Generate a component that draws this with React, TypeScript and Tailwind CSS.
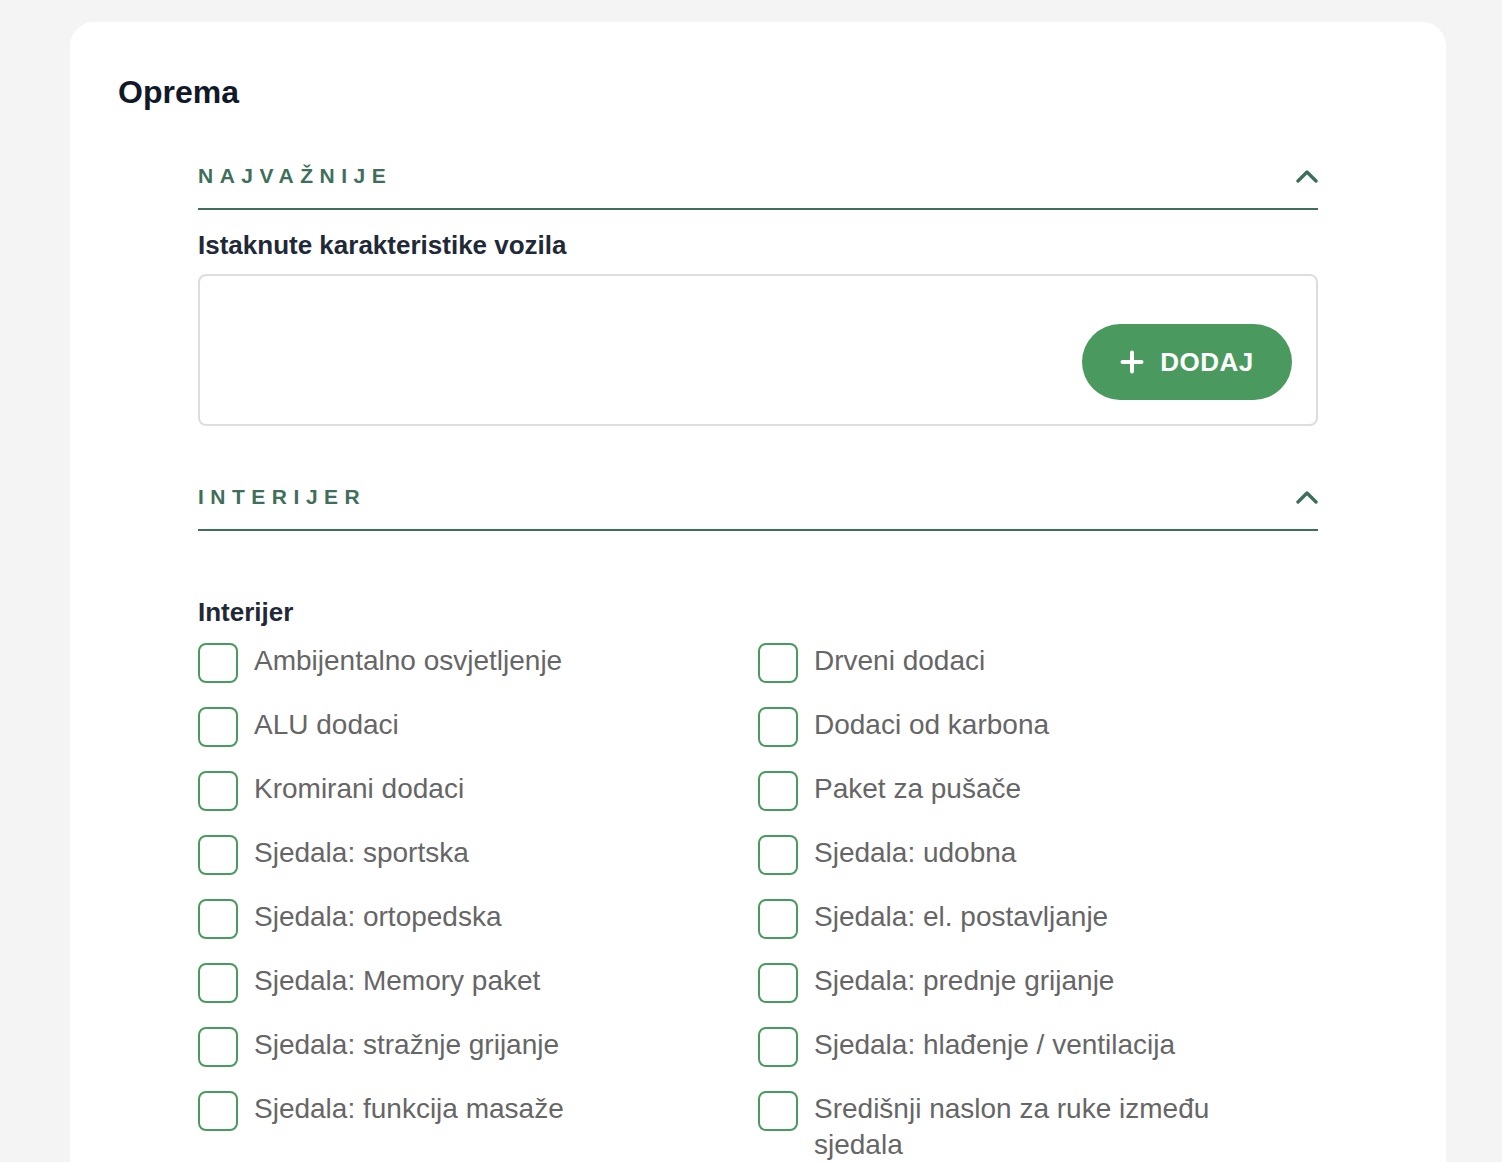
import React from "react";

const FONT = { fontFamily: '"Liberation Sans", Arial, Helvetica, sans-serif' };

const left = [
  "Ambijentalno osvjetljenje",
  "ALU dodaci",
  "Kromirani dodaci",
  "Sjedala: sportska",
  "Sjedala: ortopedska",
  "Sjedala: Memory paket",
  "Sjedala: stražnje grijanje",
  "Sjedala: funkcija masaže",
];

const right = [
  "Drveni dodaci",
  "Dodaci od karbona",
  "Paket za pušače",
  "Sjedala: udobna",
  "Sjedala: el. postavljanje",
  "Sjedala: prednje grijanje",
  "Sjedala: hlađenje / ventilacija",
  "Središnji naslon za ruke između sjedala",
];

function ChevronUp() {
  return (
    <svg width="22" height="14" viewBox="0 0 22 14" fill="none">
      <path d="M2 12 L11 3 L20 12" stroke="#3f6f5b" strokeWidth="3.4" strokeLinecap="round" strokeLinejoin="round" />
    </svg>
  );
}

function SectionHeader({ title }: { title: string }) {
  return (
    <div className="flex items-center justify-between border-b-2 border-[#3f6f5b] pb-[20px]">
      <span className="text-[21px] leading-[24px] font-bold tracking-[0.31em] text-[#3f6f5b]">{title}</span>
      <ChevronUp />
    </div>
  );
}

function Check({ label }: { label: string }) {
  return (
    <label className="flex items-start gap-4 pr-10">
      <span className="h-10 w-10 shrink-0 rounded-[8px] border-2 border-[#4a9a5f] bg-white" />
      <span className="text-[28px] leading-[36px] text-[#666666]">{label}</span>
    </label>
  );
}

export default function App() {
  const items: string[] = [];
  left.forEach((l, i) => {
    items.push(l);
    items.push(right[i]);
  });
  return (
    <div className="min-h-[1162px] bg-[#f4f4f4] pt-[22px]" style={FONT}>
      <div className="ml-[70px] w-[1376px] rounded-[24px] bg-white px-12 pt-[51px] pb-10">
        <h1 className="text-[32px] leading-[38px] font-bold text-[#111827]">Oprema</h1>

        <div className="mx-auto mt-[53px] w-[1120px]">
          <SectionHeader title="NAJVAŽNIJE" />
          <div className="mt-[20px] text-[26px] leading-[30px] font-bold text-[#1f2937]">
            Istaknute karakteristike vozila
          </div>
          <div className="mt-[14px] flex h-[152px] items-end justify-end rounded-[8px] border-2 border-[#dddddd] p-6">
            <button className="flex h-[76px] w-[210px] items-center justify-center gap-4 rounded-full bg-[#4a9a5f] text-white">
              <svg width="24" height="24" viewBox="0 0 24 24" fill="none">
                <path d="M12 2.5v19M2.5 12h19" stroke="white" strokeWidth="4" strokeLinecap="round" />
              </svg>
              <span className="text-[26px] font-bold tracking-[0.02em]">DODAJ</span>
            </button>
          </div>

          <div className="mt-[59px]">
            <SectionHeader title="INTERIJER" />
          </div>

          <div className="mt-[66px] text-[26px] leading-[30px] font-bold text-[#1f2937]">Interijer</div>
          <div className="mt-4 grid grid-cols-2 gap-y-6">
            {items.map((t) => (
              <Check key={t} label={t} />
            ))}
          </div>
        </div>
      </div>
    </div>
  );
}
